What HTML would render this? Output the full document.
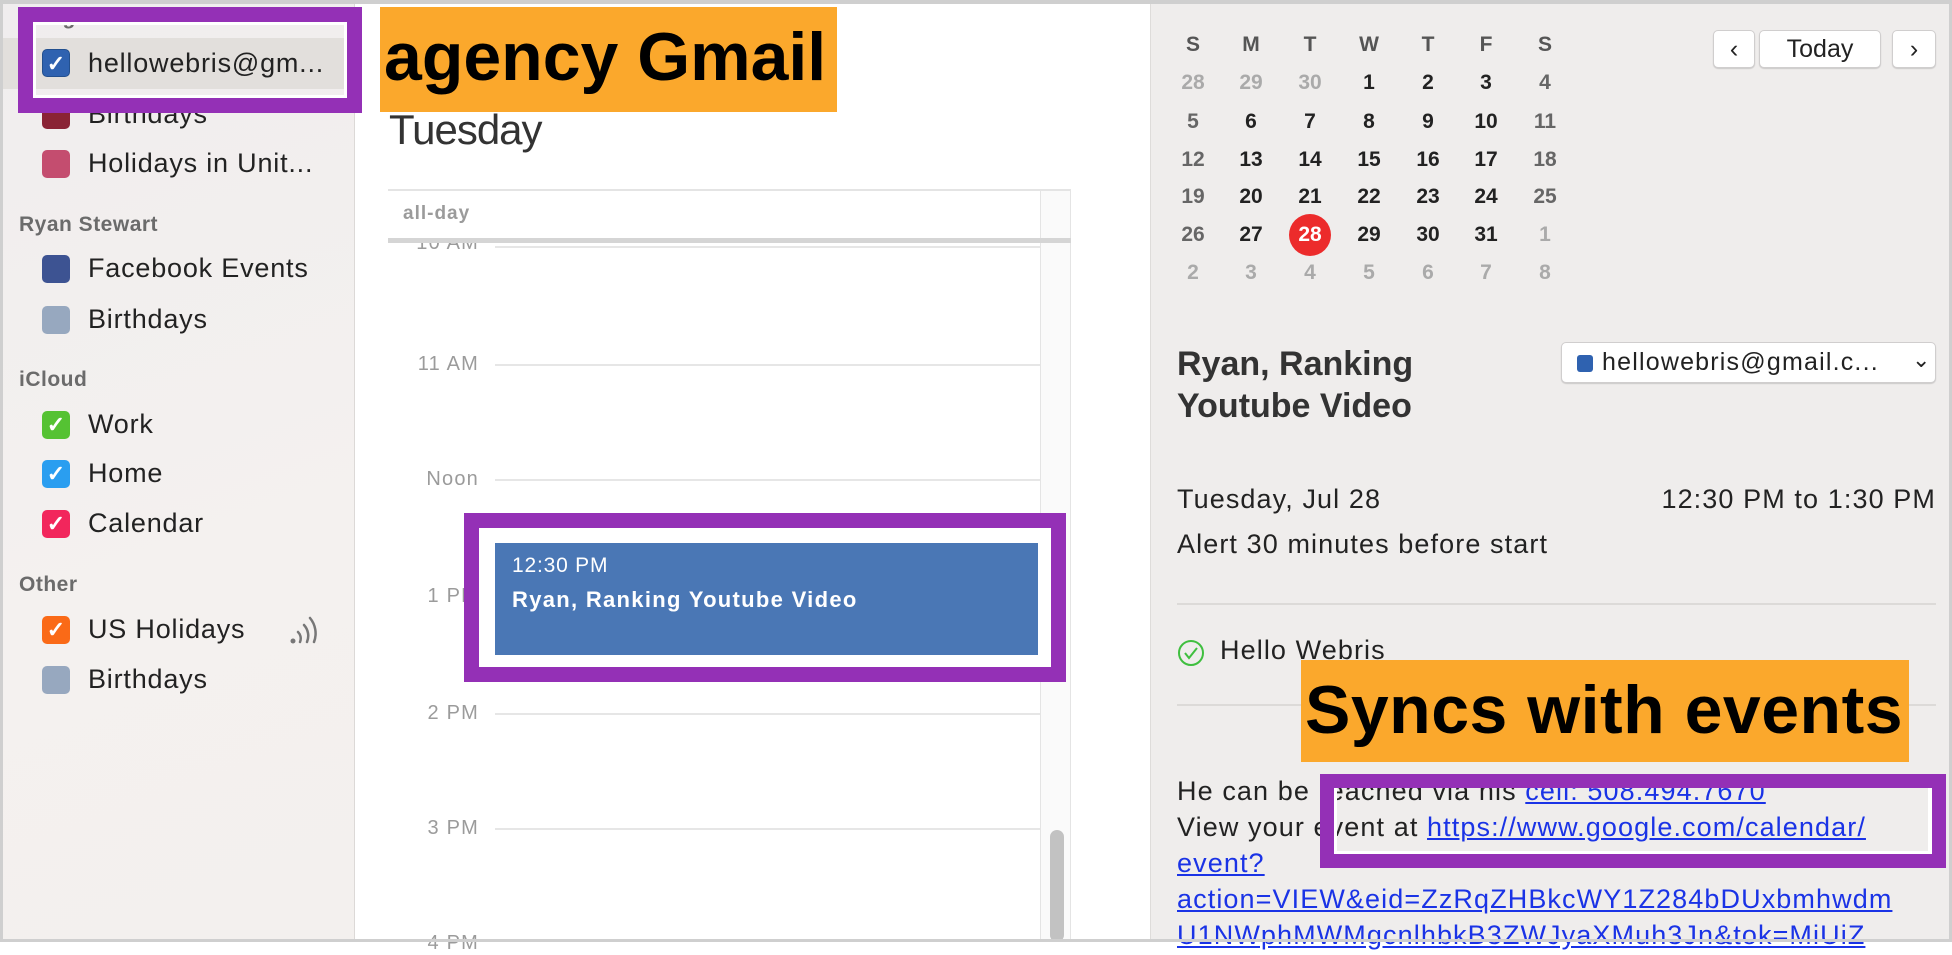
<!DOCTYPE html>
<html><head><meta charset="utf-8"><style>
*{margin:0;padding:0;box-sizing:border-box}
body{width:1952px;height:942px;overflow:hidden;background:#fff;font-family:"Liberation Sans",Helvetica,Arial,sans-serif;position:relative;color:#222}
.a{position:absolute;white-space:nowrap}
#frame{position:absolute;left:0;top:0;width:1952px;height:942px;border:3px solid #cfcfcf;border-top-width:4px;pointer-events:none;z-index:50}
#side{left:0;top:0;width:355px;height:942px;background:linear-gradient(160deg,#f0edee 0%,#f4f1ef 60%,#f3f0ee 100%);border-right:1px solid #dcd9d7}
.sel{left:0;top:38px;width:355px;height:51px;background:#e2dfdc}
.cb{position:absolute;left:42px;width:28px;height:28px;border-radius:5px;color:#fff;font-size:22px;text-align:center;line-height:28px;font-weight:bold}
.lbl{position:absolute;left:88px;font-size:27px;color:#222;letter-spacing:.8px}
.hd{position:absolute;left:19px;font-size:21px;font-weight:bold;color:#6b6b6b;letter-spacing:.5px}
.hr{position:absolute;left:495px;width:545px;height:2px;background:#e6e6e6}
.ht{position:absolute;width:90px;left:389px;text-align:right;font-size:20px;color:#9b9b9b;letter-spacing:1.2px}
#right{left:1150px;top:0;width:802px;height:942px;background:#efedec;border-left:1px solid #dedcda}
.cal{position:absolute;width:40px;text-align:center;font-size:21px;font-weight:bold}
.btn{position:absolute;top:30px;height:38px;background:#fff;border:1px solid #d0cece;border-radius:5px;box-shadow:0 1px 1px rgba(0,0,0,.15);text-align:center;line-height:36px;font-size:25px;color:#222}
.pt{font-size:27px;color:#222;position:absolute;letter-spacing:1.1px}
a{color:#1a33e6;text-decoration:underline}
</style></head><body>
<div id="frame"></div>
<div class="a" id="side"></div>
<div class="a sel"></div>
<div class="hd" style="top:6px">Google</div>
<div class="cb" style="top:49px;background:#2f62b0;border:1px solid #23508f">✓</div><div class="lbl" style="top:48px">hellowebris@gm...</div>
<div class="cb" style="top:101px;background:#8a2335"></div><div class="lbl" style="top:99px">Birthdays</div>
<div class="cb" style="top:150px;background:#c44d6f"></div><div class="lbl" style="top:148px">Holidays in Unit...</div>
<div class="hd" style="top:213px">Ryan Stewart</div>
<div class="cb" style="top:255px;background:#3d5392"></div><div class="lbl" style="top:253px">Facebook Events</div>
<div class="cb" style="top:306px;background:#97a8bf"></div><div class="lbl" style="top:304px">Birthdays</div>
<div class="hd" style="top:368px">iCloud</div>
<div class="cb" style="top:411px;background:#55c233">✓</div><div class="lbl" style="top:409px">Work</div>
<div class="cb" style="top:460px;background:#2a9ef0">✓</div><div class="lbl" style="top:458px">Home</div>
<div class="cb" style="top:510px;background:#f2265c">✓</div><div class="lbl" style="top:508px">Calendar</div>
<div class="hd" style="top:573px">Other</div>
<div class="cb" style="top:616px;background:#fa6a17">✓</div><div class="lbl" style="top:614px">US Holidays</div>
<svg class="a" style="left:288px;top:612px" width="36" height="34" viewBox="0 0 36 34"><circle cx="5" cy="29" r="2.5" fill="#777"/><path d="M10 20a9 9 0 0 1 2 10M16 13a16 16 0 0 1 3 17M22 6a24 24 0 0 1 4 24" stroke="#777" stroke-width="2.5" fill="none" stroke-linecap="round"/></svg>
<div class="cb" style="top:666px;background:#97a8bf"></div><div class="lbl" style="top:664px">Birthdays</div>

<div class="a" style="left:18px;top:7px;width:344px;height:106px;border:15px solid #9430b6"></div>
<div class="a" style="left:33px;top:22px;width:314px;height:76px;border:3px solid #fff"></div>

<div class="a" style="left:380px;top:7px;width:457px;height:105px;background:#fba82c;font-size:68px;font-weight:bold;color:#000;line-height:100px;padding-left:4px;overflow:hidden">agency Gmail</div>
<div class="a" style="left:389px;top:106px;font-size:42px;font-weight:300;color:#333;letter-spacing:-1px">Tuesday</div>

<div class="a" style="left:388px;top:189px;width:683px;height:2px;background:#e4e4e4"></div>
<div class="a" style="left:1040px;top:189px;width:1px;height:753px;background:#e4e4e4"></div>
<div class="a" style="left:1070px;top:189px;width:1px;height:753px;background:#e4e4e4"></div>
<div class="a" style="left:1041px;top:191px;width:29px;height:751px;background:#fafafa"></div>
<div class="a" style="left:403px;top:203px;font-size:19px;font-weight:bold;color:#9b9b9b;letter-spacing:1px">all-day</div>
<div class="ht" style="top:232px">10 AM</div>
<div class="a" style="left:388px;top:238px;width:683px;height:5px;background:#d5d5d5"></div>
<div class="a" style="left:388px;top:191px;width:652px;height:47px;background:#fff;z-index:0"></div>
<div class="a" style="left:403px;top:203px;font-size:19px;font-weight:bold;color:#9b9b9b;letter-spacing:1px">all-day</div>
<div class="hr" style="top:246px"></div>
<div class="hr" style="top:364px"></div><div class="ht" style="top:353px">11 AM</div>
<div class="hr" style="top:479px"></div><div class="ht" style="top:468px">Noon</div>
<div class="hr" style="top:596px"></div><div class="ht" style="top:585px">1 PM</div>
<div class="hr" style="top:713px"></div><div class="ht" style="top:702px">2 PM</div>
<div class="hr" style="top:828px"></div><div class="ht" style="top:817px">3 PM</div>
<div class="ht" style="top:932px">4 PM</div>
<div class="a" style="left:1050px;top:830px;width:14px;height:112px;background:#c2c2c2;border-radius:7px"></div>

<div class="a" style="left:464px;top:513px;width:602px;height:169px;border:15px solid #9430b6;background:#fff"></div>
<div class="a" style="left:495px;top:543px;width:543px;height:112px;background:#4a77b5;color:#fff">
<div class="a" style="left:17px;top:11px;font-size:21px;letter-spacing:.8px">12:30 PM</div>
<div class="a" style="left:17px;top:44px;font-size:22px;font-weight:bold;letter-spacing:1.3px">Ryan, Ranking Youtube Video</div></div>

<div class="a" id="right"></div>
<div id="cal"></div>
<div class="btn" style="left:1713px;width:42px">‹</div>
<div class="btn" style="left:1759px;width:122px">Today</div>
<div class="btn" style="left:1892px;width:44px">›</div>

<div class="a" style="left:1177px;top:343px;font-size:34px;font-weight:bold;color:#333;line-height:42px">Ryan, Ranking<br>Youtube Video</div>
<div class="a" style="left:1561px;top:342px;width:375px;height:41px;background:#fff;border:1px solid #d0cece;border-radius:5px;box-shadow:0 1px 1px rgba(0,0,0,.15)">
<div class="a" style="left:15px;top:12px;width:16px;height:17px;background:#2f62b0;border-radius:3px"></div>
<div class="a" style="left:40px;top:5px;font-size:25px;letter-spacing:1.2px">hellowebris@gmail.c...</div>
<div class="a" style="left:350px;top:4px;font-size:22px">⌄</div></div>

<div class="pt" style="left:1177px;top:484px">Tuesday, Jul 28</div>
<div class="pt" style="right:16px;top:484px">12:30 PM to 1:30 PM</div>
<div class="pt" style="left:1177px;top:529px">Alert 30 minutes before start</div>
<div class="a" style="left:1177px;top:603px;width:759px;height:2px;background:#dcdad8"></div>
<svg class="a" style="left:1177px;top:639px" width="28" height="28" viewBox="0 0 28 28"><circle cx="14" cy="14" r="12" fill="none" stroke="#3fbf3f" stroke-width="2"/><path d="M8 14l4 5 8-10" fill="none" stroke="#3fbf3f" stroke-width="2"/></svg>
<div class="pt" style="left:1220px;top:635px">Hello Webris</div>
<div class="a" style="left:1177px;top:704px;width:759px;height:2px;background:#dcdad8"></div>
<div class="pt" style="left:1177px;top:773px;line-height:36px">He can be reached via his <a>cell: 508.494.7670</a><br>View your event at <a>https://www.google.com/calendar/</a><br><a>event?</a><br><a>action=VIEW&amp;eid=ZzRqZHBkcWY1Z284bDUxbmhwdm</a><br><a>U1NWphMWMgcnlhbkB3ZWJyaXMuh3Jn&amp;tok=MiUiZ</a></div>

<div class="a" style="left:1301px;top:660px;width:608px;height:102px;background:#fba82c;font-size:68px;font-weight:bold;color:#000;line-height:100px;padding-left:4px;letter-spacing:.5px;overflow:hidden">Syncs with events</div>
<div class="a" style="left:1320px;top:774px;width:626px;height:94px;border:14px solid #9430b6"></div>
<div class="a" style="left:1334px;top:788px;width:598px;height:66px;border:3px solid #fff;border-top:none;border-right-width:4px"></div>

<script>
var xs=[1193,1251,1310,1369,1428,1486,1545],ys=[45,83,122,160,197,235,273];
var h="";["S","M","T","W","T","F","S"].forEach(function(l,i){h+='<div class="cal" style="left:'+(xs[i]-20)+'px;top:'+(ys[0]-12)+'px;color:#555">'+l+'</div>';});
var d=[[28,29,30,1,2,3,4],[5,6,7,8,9,10,11],[12,13,14,15,16,17,18],[19,20,21,22,23,24,25],[26,27,28,29,30,31,1],[2,3,4,5,6,7,8]];
d.forEach(function(r,ri){r.forEach(function(n,ci){var c="#222";var out=(ri==0&&n>20)||(ri>=4&&n<10);if(out)c="#aaa";else if(ci==0||ci==6)c="#666";
var y=ys[ri+1]-12;
if(ri==4&&ci==2){h+='<div class="a" style="left:'+(xs[ci]-21)+'px;top:'+(ys[ri+1]-21)+'px;width:42px;height:42px;border-radius:50%;background:#ec2b2b"></div>';c="#fff";}
h+='<div class="cal" style="left:'+(xs[ci]-20)+'px;top:'+y+'px;color:'+c+'">'+n+'</div>';});});
document.getElementById("cal").innerHTML=h;
</script>
</body></html>
